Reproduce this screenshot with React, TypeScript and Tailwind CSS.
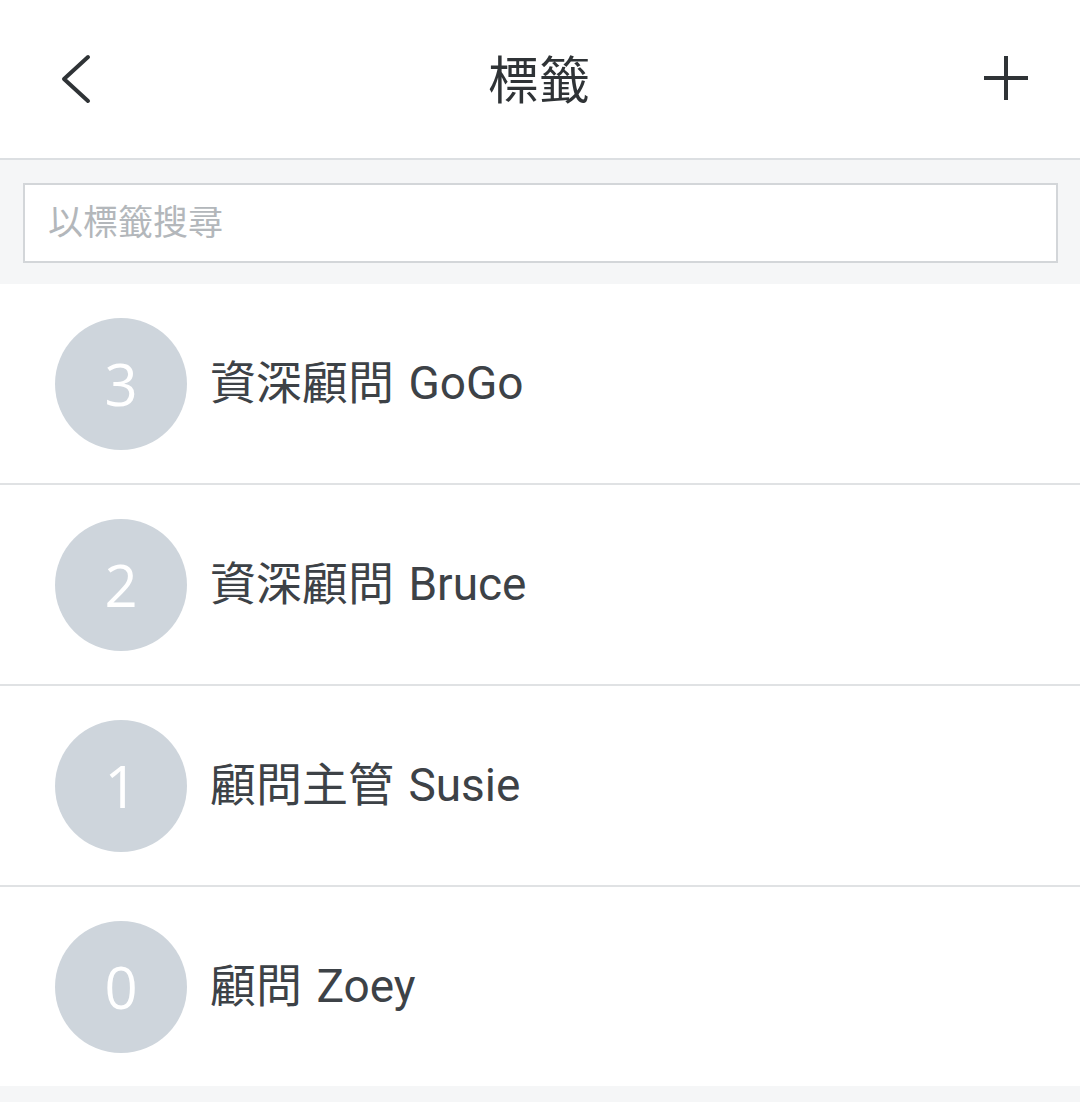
const tags = [
  { count: 3, name: "資深顧問 GoGo" },
  { count: 2, name: "資深顧問 Bruce" },
  { count: 1, name: "顧問主管 Susie" },
  { count: 0, name: "顧問 Zoey" },
]

const font = { fontFamily: 'Roboto, "Noto Sans CJK TC", sans-serif' }

export default function App() {
  return (
    <div className="flex min-h-[1102px] w-full flex-col bg-[#f5f6f7]" style={font}>
      <header className="flex h-[160px] items-center justify-between border-b-2 border-[#dcdfe2] bg-white px-[58px]">
        <svg width="40" height="50" viewBox="0 0 40 50" fill="none" className="-ml-[2px] -mt-[1px]">
          <path d="M32 3 L8 25 L32 47" stroke="#2f3336" strokeWidth="4" strokeLinecap="round" strokeLinejoin="round" />
        </svg>
        <h1 className="pt-[4px] text-[51px] leading-none text-[#2f3336]">標籤</h1>
        <svg width="48" height="48" viewBox="0 0 48 48" fill="none" className="-mr-[8px] -mt-[3px]">
          <path d="M24 2 V46 M2 24 H46" stroke="#2f3336" strokeWidth="4" />
        </svg>
      </header>

      <div className="bg-[#f5f6f7] pb-[21px] pl-[23px] pr-[22px] pt-[23px]">
        <input
          placeholder="以標籤搜尋"
          className="h-[80px] w-full border-2 border-[#d3d6d9] bg-white px-[23px] text-[35px] text-[#3d4247] outline-none placeholder:text-[#b3b7bb]"
          style={font}
        />
      </div>

      <ul className="flex flex-col bg-white">
        {tags.map((tag, i) => (
          <li
            key={i}
            className={
              i < tags.length - 1
                ? "flex h-[201px] items-center gap-[23px] border-b-2 border-[#e0e2e4] pl-[55px]"
                : "flex h-[199px] items-center gap-[23px] pl-[55px]"
            }
          >
            <div
              className="flex h-[132px] w-[132px] shrink-0 items-center justify-center rounded-full bg-[#ced5dc] text-[58px] leading-none text-white"
              style={{ fontFamily: '"Open Sans", sans-serif' }}
            >
              {tag.count}
            </div>
            <span className="text-[46px] text-[#3d4247] [word-spacing:3px]">{tag.name}</span>
          </li>
        ))}
      </ul>
    </div>
  )
}
